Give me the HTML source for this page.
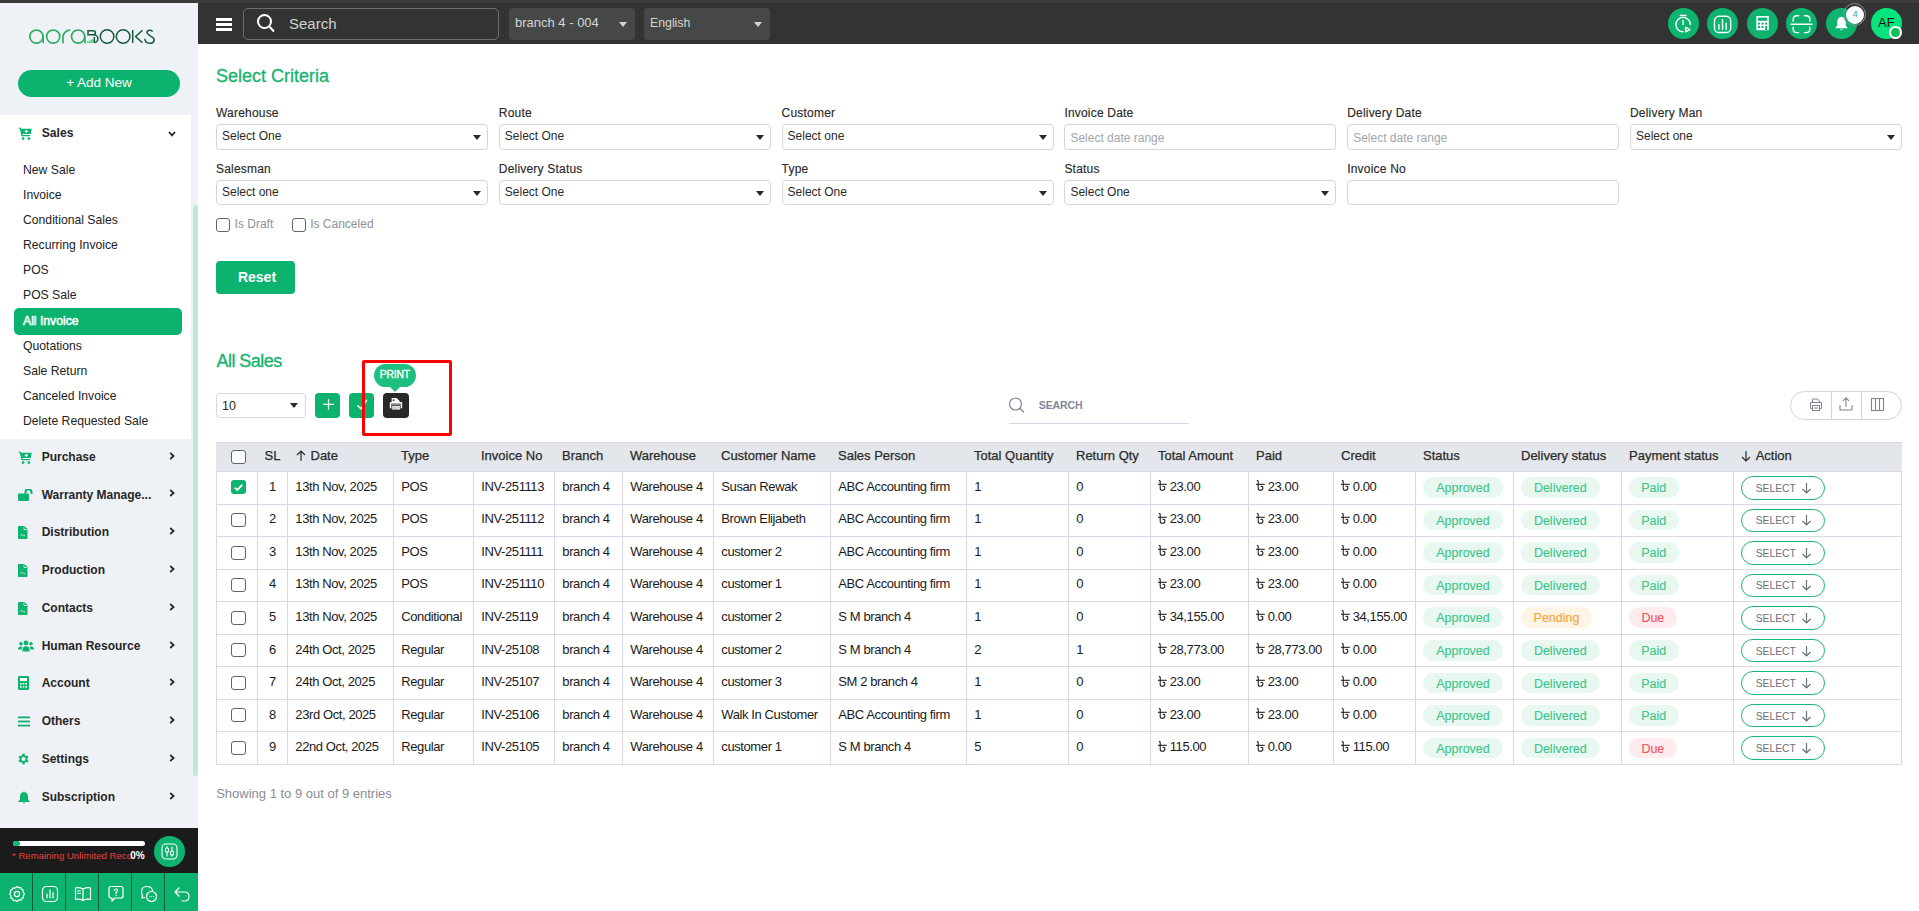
<!DOCTYPE html>
<html><head><meta charset="utf-8"><title>All Sales</title>
<style>
*{box-sizing:border-box;margin:0;padding:0}
html,body{width:1919px;height:911px;overflow:hidden;background:#fff;font-family:"Liberation Sans",sans-serif;color:#222}
.a{position:absolute}
#topstrip{left:0;top:0;width:1919px;height:3px;background:#3c3c3c}
#sb{left:0;top:3px;width:198px;height:908px;background:#eef2f7}
#sbwhite{left:0;top:115px;width:191px;height:323.5px;background:#fff}
#thumb{left:193px;top:205px;width:5px;height:571px;background:#bfe8da;border-radius:2.5px}
.sub{left:23px;font-size:12.2px;color:#222;height:25px;line-height:25px;white-space:nowrap}
.mi{left:41.7px;font-size:12px;font-weight:bold;color:#262626;white-space:nowrap;line-height:14px}
#hdr{left:198px;top:3px;width:1721px;height:41px;background:#323433}
.lbl{font-size:12px;color:#2a2a2a;white-space:nowrap;line-height:14px;letter-spacing:0.2px;-webkit-text-stroke:0.15px currentColor}
.th{font-size:13px;line-height:15px;color:#2b2b2b;white-space:nowrap;-webkit-text-stroke:0.25px currentColor}
.td{font-size:13px;line-height:15px;color:#1a1a1a;white-space:nowrap;letter-spacing:-0.4px}
.bd{height:20.5px;border-radius:10px;font-size:12.5px;line-height:22.3px;-webkit-text-stroke:0.12px currentColor;text-align:center;white-space:nowrap}
</style></head><body>
<div id="topstrip" class="a"></div>
<div id="sb" class="a"></div>
<div id="sbwhite" class="a"></div>
<div id="thumb" class="a"></div>
<svg class="a" style="left:27px;top:27px" width="130" height="19" viewBox="27 27 130 19">
<g fill="none" stroke="#2aac5c" stroke-width="1.65">
<circle cx="36.4" cy="36.6" r="6.6"/><path d="M43.2 36 V43.3"/>
<circle cx="53.2" cy="36.6" r="6.6"/>
<path d="M63 43.3 V37 A7 6.9 0 0 1 70.2 30.1"/>
<circle cx="78.1" cy="36.6" r="6.6"/><path d="M84.9 36 V43.3"/>
</g>
<path d="M87 43.1 V41.6 H88.6 V40.8 H90.2 V40 H91.6 V39.2 H93.5 V43.1Z" fill="#72d09c"/>
<g fill="none" stroke="#17583a" stroke-width="1.5">
<path d="M88 30.65 H93.3 A2.07 2.07 0 0 1 93.3 34.8 H88 Z"/>
<path d="M93 34.8 H94 A3.85 3.85 0 0 1 94 42.5 H94.2 M94.3 37 V42.5"/>
<circle cx="107.1" cy="36.5" r="6.8"/>
<circle cx="123.1" cy="36.5" r="6.8"/>
<path d="M132.7 30 V42.9 M142.5 30.2 L135.6 36.5 L142.5 42.8"/>
<path d="M152.6 31.6 C151.6 29.6 147.2 29.6 146.9 32.6 C146.9 34 148 34.8 152.6 37.3 C155.2 39 154.6 43.3 149.8 43.3 C146.6 43.3 145 41.4 144.8 38.8"/>
</g></svg>
<div class="a" style="left:18px;top:70px;width:162px;height:27px;border-radius:14px;background:#0bb36f;color:#fff;font-size:13.5px;text-align:center;line-height:25.5px">+ Add New</div>
<div class="a" style="left:18px;top:127px;line-height:0"><svg width="14" height="13" viewBox="0 0 14 13"><path d="M0.3 1.3 C0.8 0.2 2.2 0.1 2.9 1.2 L3.3 1.8 H13.8 L12.7 6.9 H4.3 L4.6 7.9 H12 V9.3 H3.5 L1.9 2.2 C1.4 1.5 0.9 1.4 0.3 1.3Z" fill="#0db36f"/><circle cx="5.1" cy="11.6" r="1.4" fill="#0db36f"/><circle cx="10.9" cy="11.6" r="1.4" fill="#0db36f"/><path d="M8.3 2.9v3M6.8 4.4h3" stroke="#fff" stroke-width="1.1"/></svg></div>
<div class="a mi" style="top:126px;font-size:12.2px">Sales</div>
<div class="a" style="left:168px;top:130.5px;line-height:0"><svg width="8" height="6" viewBox="0 0 8 6"><path d="M1 1 L4 4.3 L7 1" stroke="#262626" stroke-width="1.8" fill="none"/></svg></div>
<div class="a" style="left:18px;top:450.5px;line-height:0"><svg width="14" height="13" viewBox="0 0 14 13"><path d="M0.3 1.3 C0.8 0.2 2.2 0.1 2.9 1.2 L3.3 1.8 H13.8 L12.7 6.9 H4.3 L4.6 7.9 H12 V9.3 H3.5 L1.9 2.2 C1.4 1.5 0.9 1.4 0.3 1.3Z" fill="#0db36f"/><circle cx="5.1" cy="11.6" r="1.4" fill="#0db36f"/><circle cx="10.9" cy="11.6" r="1.4" fill="#0db36f"/><path d="M8.3 2.9v3M6.8 4.4h3" stroke="#fff" stroke-width="1.1"/></svg></div>
<div class="a mi" style="top:450px">Purchase</div>
<div class="a" style="left:169px;top:451.7px;line-height:0"><svg width="6" height="8" viewBox="0 0 6 8"><path d="M1.2 1 L4.6 4 L1.2 7" stroke="#262626" stroke-width="1.7" fill="none"/></svg></div>
<div class="a" style="left:18px;top:488.5px;line-height:0"><svg width="15" height="12" viewBox="0 0 15 12"><rect x="0" y="4.5" width="11" height="7.5" rx="1" fill="#0db36f"/><path d="M7.5 4.8 V3.3 A3 3 0 0 1 13.5 3.3 V5" stroke="#0db36f" stroke-width="2" fill="none"/></svg></div>
<div class="a mi" style="top:487.5px">Warranty Manage...</div>
<div class="a" style="left:169px;top:489.2px;line-height:0"><svg width="6" height="8" viewBox="0 0 6 8"><path d="M1.2 1 L4.6 4 L1.2 7" stroke="#262626" stroke-width="1.7" fill="none"/></svg></div>
<div class="a" style="left:18px;top:525.5px;line-height:0"><svg width="10" height="13" viewBox="0 0 10 13"><path d="M0.8 0 H6.5 L9.5 3 V12.2 Q9.5 13 8.7 13 H0.8 Q0 13 0 12.2 V0.8 Q0 0 0.8 0Z" fill="#0db36f"/><path d="M6 0.5 V3.5 H9" stroke="#fff" stroke-width="0.7" fill="none"/><path d="M2.5 9.5 Q3.5 7 4.5 9 Q5.5 10 7 9.6" stroke="#fff" stroke-width="0.7" fill="none"/></svg></div>
<div class="a mi" style="top:525px">Distribution</div>
<div class="a" style="left:169px;top:526.7px;line-height:0"><svg width="6" height="8" viewBox="0 0 6 8"><path d="M1.2 1 L4.6 4 L1.2 7" stroke="#262626" stroke-width="1.7" fill="none"/></svg></div>
<div class="a" style="left:18px;top:563.5px;line-height:0"><svg width="10" height="13" viewBox="0 0 10 13"><path d="M0.8 0 H6.5 L9.5 3 V12.2 Q9.5 13 8.7 13 H0.8 Q0 13 0 12.2 V0.8 Q0 0 0.8 0Z" fill="#0db36f"/><path d="M6 0.5 V3.5 H9" stroke="#fff" stroke-width="0.7" fill="none"/><path d="M2.5 9.5 Q3.5 7 4.5 9 Q5.5 10 7 9.6" stroke="#fff" stroke-width="0.7" fill="none"/></svg></div>
<div class="a mi" style="top:563px">Production</div>
<div class="a" style="left:169px;top:564.7px;line-height:0"><svg width="6" height="8" viewBox="0 0 6 8"><path d="M1.2 1 L4.6 4 L1.2 7" stroke="#262626" stroke-width="1.7" fill="none"/></svg></div>
<div class="a" style="left:18px;top:601.5px;line-height:0"><svg width="10" height="13" viewBox="0 0 10 13"><path d="M0.8 0 H6.5 L9.5 3 V12.2 Q9.5 13 8.7 13 H0.8 Q0 13 0 12.2 V0.8 Q0 0 0.8 0Z" fill="#0db36f"/><path d="M6 0.5 V3.5 H9" stroke="#fff" stroke-width="0.7" fill="none"/><path d="M2.5 9.5 Q3.5 7 4.5 9 Q5.5 10 7 9.6" stroke="#fff" stroke-width="0.7" fill="none"/></svg></div>
<div class="a mi" style="top:601px">Contacts</div>
<div class="a" style="left:169px;top:602.7px;line-height:0"><svg width="6" height="8" viewBox="0 0 6 8"><path d="M1.2 1 L4.6 4 L1.2 7" stroke="#262626" stroke-width="1.7" fill="none"/></svg></div>
<div class="a" style="left:18px;top:640px;line-height:0"><svg width="16" height="12" viewBox="0 0 16 12"><circle cx="8" cy="3" r="2.4" fill="#0db36f"/><circle cx="3" cy="3.8" r="1.8" fill="#0db36f"/><circle cx="13" cy="3.8" r="1.8" fill="#0db36f"/><path d="M4.3 11.5 Q4.3 6.3 8 6.3 Q11.7 6.3 11.7 11.5Z" fill="#0db36f"/><path d="M0 9.5 Q0 6.5 3 6.5 Q4 6.5 4.6 7 Q3.6 8 3.5 9.5Z M16 9.5 Q16 6.5 13 6.5 Q12 6.5 11.4 7 Q12.4 8 12.5 9.5Z" fill="#0db36f"/></svg></div>
<div class="a mi" style="top:639px">Human Resource</div>
<div class="a" style="left:169px;top:640.7px;line-height:0"><svg width="6" height="8" viewBox="0 0 6 8"><path d="M1.2 1 L4.6 4 L1.2 7" stroke="#262626" stroke-width="1.7" fill="none"/></svg></div>
<div class="a" style="left:18px;top:676px;line-height:0"><svg width="11" height="14" viewBox="0 0 11 14"><rect x="0" y="0" width="11" height="14" rx="1.2" fill="#0db36f"/><rect x="2" y="2" width="7" height="3" fill="#fff"/><g fill="#fff"><rect x="2" y="7" width="1.6" height="1.6"/><rect x="4.7" y="7" width="1.6" height="1.6"/><rect x="7.4" y="7" width="1.6" height="1.6"/><rect x="2" y="10" width="1.6" height="1.6"/><rect x="4.7" y="10" width="1.6" height="1.6"/><rect x="7.4" y="10" width="1.6" height="1.6"/></g></svg></div>
<div class="a mi" style="top:676px">Account</div>
<div class="a" style="left:169px;top:677.7px;line-height:0"><svg width="6" height="8" viewBox="0 0 6 8"><path d="M1.2 1 L4.6 4 L1.2 7" stroke="#262626" stroke-width="1.7" fill="none"/></svg></div>
<div class="a" style="left:18px;top:715.5px;line-height:0"><svg width="12" height="11" viewBox="0 0 12 11"><rect x="0" y="0.5" width="12" height="1.8" fill="#0db36f"/><rect x="0" y="4.6" width="12" height="1.8" fill="#0db36f"/><rect x="0" y="8.7" width="12" height="1.8" fill="#0db36f"/></svg></div>
<div class="a mi" style="top:714px">Others</div>
<div class="a" style="left:169px;top:715.7px;line-height:0"><svg width="6" height="8" viewBox="0 0 6 8"><path d="M1.2 1 L4.6 4 L1.2 7" stroke="#262626" stroke-width="1.7" fill="none"/></svg></div>
<div class="a" style="left:16px;top:752px;line-height:0"><svg width="14" height="14" viewBox="0 0 24 24"><path fill="#0db36f" d="M19.4 13a7.5 7.5 0 0 0 0-2l2.1-1.6-2-3.5-2.5 1a7.3 7.3 0 0 0-1.7-1L14.9 3h-4l-.4 2.9a7.3 7.3 0 0 0-1.7 1l-2.5-1-2 3.5L6.4 11a7.5 7.5 0 0 0 0 2l-2.1 1.6 2 3.5 2.5-1a7.3 7.3 0 0 0 1.7 1l.4 2.9h4l.4-2.9a7.3 7.3 0 0 0 1.7-1l2.5 1 2-3.5zM12.9 15.5a3.5 3.5 0 1 1 0-7 3.5 3.5 0 0 1 0 7z"/></svg></div>
<div class="a mi" style="top:752px">Settings</div>
<div class="a" style="left:169px;top:753.7px;line-height:0"><svg width="6" height="8" viewBox="0 0 6 8"><path d="M1.2 1 L4.6 4 L1.2 7" stroke="#262626" stroke-width="1.7" fill="none"/></svg></div>
<div class="a" style="left:18px;top:790.5px;line-height:0"><svg width="12" height="13" viewBox="0 0 12 13"><path d="M6 0.5 Q6.8 0.5 6.8 1.3 Q10 2 10 5.5 V8.5 L11.5 10.3 V11 H0.5 V10.3 L2 8.5 V5.5 Q2 2 5.2 1.3 Q5.2 0.5 6 0.5Z" fill="#0db36f"/><path d="M4.5 11.6 Q6 13.6 7.5 11.6Z" fill="#0db36f"/></svg></div>
<div class="a mi" style="top:790px">Subscription</div>
<div class="a" style="left:169px;top:791.7px;line-height:0"><svg width="6" height="8" viewBox="0 0 6 8"><path d="M1.2 1 L4.6 4 L1.2 7" stroke="#262626" stroke-width="1.7" fill="none"/></svg></div>
<div class="a sub" style="top:157.5px">New Sale</div>
<div class="a sub" style="top:182.5px">Invoice</div>
<div class="a sub" style="top:207.5px">Conditional Sales</div>
<div class="a sub" style="top:232.5px">Recurring Invoice</div>
<div class="a sub" style="top:258.0px">POS</div>
<div class="a sub" style="top:283.0px">POS Sale</div>
<div class="a" style="left:14px;top:308px;width:168px;height:27px;background:#0bb36f;border-radius:5px"></div>
<div class="a sub" style="top:308.5px;color:#fff;-webkit-text-stroke:0.5px #fff">All Invoice</div>
<div class="a sub" style="top:333.5px">Quotations</div>
<div class="a sub" style="top:358.5px">Sale Return</div>
<div class="a sub" style="top:383.5px">Canceled Invoice</div>
<div class="a sub" style="top:409.0px">Delete Requested Sale</div>
<div class="a" style="left:0;top:828px;width:198px;height:45px;background:#1b1b1b"></div>
<div class="a" style="left:13px;top:841px;width:132px;height:5px;border-radius:3px;background:#fff"></div>
<div class="a" style="left:13px;top:841px;width:7px;height:5px;border-radius:3px;background:#0db36f"></div>
<div class="a" style="left:12px;top:850px;font-size:9.6px;color:#e8403e;white-space:nowrap;line-height:12px">* Remaining Unlimited Reco</div>
<div class="a" style="left:130.3px;top:850px;font-size:10px;color:#fff;font-weight:bold;white-space:nowrap;line-height:12px">0%</div>
<div class="a" style="left:154px;top:836px;width:31px;height:31px;border-radius:50%;background:#0db36f"></div>
<svg class="a" style="left:161px;top:843px" width="17" height="17" viewBox="0 0 17 17" fill="none" stroke="#fff" stroke-width="1.1"><rect x="1" y="1" width="15" height="15" rx="4"/><path d="M6 3.5V13.5M11 3.5V13.5"/><rect x="4.5" y="5" width="3" height="4" rx="1" fill="#0db36f"/><rect x="9.5" y="8" width="3" height="4" rx="1" fill="#0db36f"/></svg>
<div class="a" style="left:0;top:873px;width:198px;height:38px;background:#0bb36f"></div>
<div class="a" style="left:32px;top:873px;width:1px;height:38px;background:#145c3c"></div>
<div class="a" style="left:65px;top:873px;width:1px;height:38px;background:#145c3c"></div>
<div class="a" style="left:98px;top:873px;width:1px;height:38px;background:#145c3c"></div>
<div class="a" style="left:131px;top:873px;width:1px;height:38px;background:#145c3c"></div>
<div class="a" style="left:164px;top:873px;width:1px;height:38px;background:#145c3c"></div>
<svg class="a" style="left:8px;top:885px" width="18" height="18" viewBox="0 0 18 18" fill="none" stroke="#fff" stroke-width="1.2" stroke-linecap="round" stroke-linejoin="round"><circle cx="9" cy="9" r="2.6"/><path d="M9 1.5l1.6 1.2 2-.3.8 1.8 1.8.8-.3 2L16.5 9l-1.2 1.6.3 2-1.8.8-.8 1.8-2-.3L9 16.5l-1.6-1.2-2 .3-.8-1.8-1.8-.8.3-2L1.5 9l1.2-1.6-.3-2 1.8-.8.8-1.8 2 .3z"/></svg>
<svg class="a" style="left:40.5px;top:885px" width="18" height="18" viewBox="0 0 18 18" fill="none" stroke="#fff" stroke-width="1.2" stroke-linecap="round" stroke-linejoin="round"><rect x="1.5" y="1.5" width="15" height="15" rx="4"/><path d="M6 13V9M9 13V5M12 13V7.5"/></svg>
<svg class="a" style="left:73.5px;top:885px" width="18" height="18" viewBox="0 0 18 18" fill="none" stroke="#fff" stroke-width="1.2" stroke-linecap="round" stroke-linejoin="round"><path d="M9 4 Q5 2 1.5 3 V14.5 Q5 13.5 9 15.5 Q13 13.5 16.5 14.5 V3 Q13 2 9 4Z M9 4V15.5 M3.5 6H6.5M3.5 8.5H6.5"/></svg>
<svg class="a" style="left:106.5px;top:885px" width="18" height="18" viewBox="0 0 18 18" fill="none" stroke="#fff" stroke-width="1.2" stroke-linecap="round" stroke-linejoin="round"><path d="M2 3.5 Q2 1.5 4 1.5 H14 Q16 1.5 16 3.5 V11 Q16 13 14 13 H8 L5 16 V13 H4 Q2 13 2 11Z"/><path d="M7.5 5.5 Q7.5 4 9 4 Q10.5 4 10.5 5.5 Q10.5 6.8 9 7.3 V8.5 M9 10.2V10.5"/></svg>
<svg class="a" style="left:139.5px;top:885px" width="18" height="18" viewBox="0 0 18 18" fill="none" stroke="#fff" stroke-width="1.2" stroke-linecap="round" stroke-linejoin="round"><path d="M12.5 5.5 Q11.5 1.5 7 1.5 Q1.5 1.5 1.5 7 Q1.5 9 2.5 10.5 L2 13 L4.5 12.5"/><circle cx="11.5" cy="11.5" r="5"/><path d="M9.5 11.5h.1M11.5 11.5h.1M13.5 11.5h.1"/></svg>
<svg class="a" style="left:172.5px;top:885px" width="18" height="18" viewBox="0 0 18 18" fill="none" stroke="#fff" stroke-width="1.2" stroke-linecap="round" stroke-linejoin="round"><path d="M6 3 L2 7 L6 11 M2 7 H11.5 Q16 7 16 11.5 Q16 16 11.5 16 H9"/></svg>
<div id="hdr" class="a"></div>
<div class="a" style="left:216px;top:18px;width:16px;height:3px;background:#fff"></div>
<div class="a" style="left:216px;top:23px;width:16px;height:3px;background:#fff"></div>
<div class="a" style="left:216px;top:28px;width:16px;height:3px;background:#fff"></div>
<div class="a" style="left:243px;top:8px;width:256px;height:32px;border:1px solid #69716e;border-radius:5px"></div>
<svg class="a" style="left:256px;top:13px" width="20" height="21" viewBox="0 0 20 21" fill="none" stroke="#fff" stroke-width="2"><circle cx="8.5" cy="8.5" r="6.5"/><path d="M13.3 13.5 L18 18.5"/></svg>
<div class="a" style="left:289px;top:15px;font-size:15px;color:#cfd2d0;line-height:18px">Search</div>
<div class="a" style="left:509px;top:8px;width:126px;height:32px;border-radius:4px;background:#454847"></div>
<div class="a" style="left:515px;top:15px;font-size:13px;color:#d4d6d5;line-height:15px;white-space:nowrap">branch 4 - 004</div>
<div class="a" style="left:619px;top:22px;width:0;height:0;border-left:4.5px solid transparent;border-right:4.5px solid transparent;border-top:5px solid #d4d6d5"></div>
<div class="a" style="left:644px;top:8px;width:126px;height:32px;border-radius:4px;background:#454847"></div>
<div class="a" style="left:650px;top:16px;font-size:12.3px;color:#d4d6d5;line-height:15px;white-space:nowrap">English</div>
<div class="a" style="left:754px;top:22px;width:0;height:0;border-left:4.5px solid transparent;border-right:4.5px solid transparent;border-top:5px solid #d4d6d5"></div>
<div class="a" style="left:1667.8px;top:7.8px;width:31px;height:31px;border-radius:50%;background:#0db36f"></div>
<svg class="a" style="left:1671.8px;top:11.8px" width="23" height="23" viewBox="0 0 23 23" fill="none" stroke="#fff" stroke-width="1.4" stroke-linecap="round"><path d="M8.3 3.5 H14"/><path d="M11.1 8.4 V12.4"/><path d="M18.3 12.6 A7.2 7.2 0 1 0 11.1 19.8"/><path d="M13.6 15.4 L17.9 17.6 L13.6 19.8Z" stroke-linejoin="round"/></svg>
<div class="a" style="left:1707.4px;top:7.8px;width:31px;height:31px;border-radius:50%;background:#0db36f"></div>
<svg class="a" style="left:1711.4px;top:11.8px" width="23" height="23" viewBox="0 0 23 23" fill="none" stroke="#fff" stroke-width="1.4" stroke-linecap="round"><rect x="3.5" y="4.3" width="16.2" height="16.2" rx="4.6"/><path d="M7.9 17.2V12.4M11.5 17.2V7.6M15.1 17.2V11.2"/></svg>
<div class="a" style="left:1746.9px;top:7.8px;width:31px;height:31px;border-radius:50%;background:#0db36f"></div>
<svg class="a" style="left:1750.9px;top:11.8px" width="23" height="23" viewBox="0 0 23 23" fill="none" stroke="#fff" stroke-width="1.4" stroke-linecap="round"><rect x="5.3" y="4" width="12.5" height="14.2" rx="0.6" fill="#fff" stroke="none"/><rect x="6.9" y="5.6" width="9.3" height="3.2" fill="#0db36f" stroke="none"/><g fill="#0db36f" stroke="none"><rect x="7" y="10.6" width="2" height="2"/><rect x="10.6" y="10.6" width="2" height="2"/><rect x="14.2" y="10.6" width="2" height="2"/><rect x="7" y="14" width="2" height="2"/><rect x="10.6" y="14" width="2" height="2"/><rect x="14.2" y="14" width="2" height="4.2"/></g></svg>
<div class="a" style="left:1786.3px;top:7.8px;width:31px;height:31px;border-radius:50%;background:#0db36f"></div>
<svg class="a" style="left:1790.3px;top:11.8px" width="23" height="23" viewBox="0 0 23 23" fill="none" stroke="#fff" stroke-width="1.4" stroke-linecap="round"><path d="M3.2 9.3 V7.5 Q3.2 3.8 6.9 3.8 H8.6 M14.4 3.8 H16.1 Q19.8 3.8 19.8 7.5 V9.3 M19.8 15.1 V16.9 Q19.8 20.6 16.1 20.6 H14.4 M8.6 20.6 H6.9 Q3.2 20.6 3.2 16.9 V15.1"/><path d="M1 12.2 H22"/></svg>
<div class="a" style="left:1825.5px;top:7.8px;width:31px;height:31px;border-radius:50%;background:#0db36f"></div>
<svg class="a" style="left:1829.5px;top:11.8px" width="23" height="23" viewBox="0 0 23 23" fill="none" stroke="#fff" stroke-width="1.4" stroke-linecap="round"><path d="M11.5 4.8 Q15.8 5.3 15.8 10.3 V13.6 L17.9 16.3 H5.1 L7.2 13.6 V10.3 Q7.2 5.3 11.5 4.8Z" fill="#fff" stroke="none"/><path d="M10 17.2 Q11.5 19.2 13 17.2Z" fill="#fff" stroke="none"/></svg>
<div class="a" style="left:1843.4px;top:2.8px;width:23px;height:23px;border-radius:50%;border:1px solid #8d8f8e"></div>
<div class="a" style="left:1846px;top:5.8px;width:18px;height:18px;border-radius:50%;background:#fff"></div>
<div class="a" style="left:1846px;top:9px;width:18px;text-align:center;font-size:9.3px;color:#3aa3c2;line-height:11px">4</div>
<div class="a" style="left:1870.9px;top:7.8px;width:31px;height:31px;border-radius:50%;background:#06e47b"></div>
<div class="a" style="left:1870.9px;top:15px;width:31px;text-align:center;font-size:13px;color:#111;line-height:16px">AF</div>
<div class="a" style="left:1889.1px;top:25.9px;width:12.8px;height:12.8px;border-radius:50%;background:#0fbf55;border:2px solid #fff"></div>
<div class="a" style="left:216px;top:65.7px;font-size:18px;line-height:20px;color:#16b36f;white-space:nowrap;-webkit-text-stroke:0.3px #16b36f">Select Criteria</div>
<div class="a" style="left:216.5px;top:350.7px;font-size:18px;line-height:20px;color:#16b36f;white-space:nowrap;letter-spacing:-0.55px;-webkit-text-stroke:0.3px #16b36f">All Sales</div>
<div class="a lbl" style="left:216px;top:106.3px">Warehouse</div>
<div class="a" style="left:216px;top:124px;width:272px;height:26px;border:1px solid #d5d4e3;border-radius:4px;background:#fff"></div>
<div class="a" style="left:222px;top:129px;font-size:12px;line-height:14px;color:#2a2a2a;white-space:nowrap">Select One</div>
<div class="a" style="left:473px;top:134.5px;width:0;height:0;border-left:4.3px solid transparent;border-right:4.3px solid transparent;border-top:5px solid #2a2a2a"></div>
<div class="a lbl" style="left:498.8px;top:106.3px">Route</div>
<div class="a" style="left:498.8px;top:124px;width:272px;height:26px;border:1px solid #d5d4e3;border-radius:4px;background:#fff"></div>
<div class="a" style="left:504.8px;top:129px;font-size:12px;line-height:14px;color:#2a2a2a;white-space:nowrap">Select One</div>
<div class="a" style="left:755.8px;top:134.5px;width:0;height:0;border-left:4.3px solid transparent;border-right:4.3px solid transparent;border-top:5px solid #2a2a2a"></div>
<div class="a lbl" style="left:781.6px;top:106.3px">Customer</div>
<div class="a" style="left:781.6px;top:124px;width:272px;height:26px;border:1px solid #d5d4e3;border-radius:4px;background:#fff"></div>
<div class="a" style="left:787.6px;top:129px;font-size:12px;line-height:14px;color:#2a2a2a;white-space:nowrap">Select one</div>
<div class="a" style="left:1038.6px;top:134.5px;width:0;height:0;border-left:4.3px solid transparent;border-right:4.3px solid transparent;border-top:5px solid #2a2a2a"></div>
<div class="a lbl" style="left:1064.4px;top:106.3px">Invoice Date</div>
<div class="a" style="left:1064.4px;top:124px;width:272px;height:26px;border:1px solid #d5d4e3;border-radius:4px;background:#fff"></div>
<div class="a" style="left:1070.4px;top:130.5px;font-size:12px;line-height:14px;color:#a3a6ae;white-space:nowrap">Select date range</div>
<div class="a lbl" style="left:1347.2px;top:106.3px">Delivery Date</div>
<div class="a" style="left:1347.2px;top:124px;width:272px;height:26px;border:1px solid #d5d4e3;border-radius:4px;background:#fff"></div>
<div class="a" style="left:1353.2px;top:130.5px;font-size:12px;line-height:14px;color:#a3a6ae;white-space:nowrap">Select date range</div>
<div class="a lbl" style="left:1630px;top:106.3px">Delivery Man</div>
<div class="a" style="left:1630px;top:124px;width:272px;height:26px;border:1px solid #d5d4e3;border-radius:4px;background:#fff"></div>
<div class="a" style="left:1636px;top:129px;font-size:12px;line-height:14px;color:#2a2a2a;white-space:nowrap">Select one</div>
<div class="a" style="left:1887px;top:134.5px;width:0;height:0;border-left:4.3px solid transparent;border-right:4.3px solid transparent;border-top:5px solid #2a2a2a"></div>
<div class="a lbl" style="left:216px;top:161.8px">Salesman</div>
<div class="a" style="left:216px;top:180px;width:272px;height:25px;border:1px solid #d5d4e3;border-radius:4px;background:#fff"></div>
<div class="a" style="left:222px;top:185px;font-size:12px;line-height:14px;color:#2a2a2a;white-space:nowrap">Select one</div>
<div class="a" style="left:473px;top:190.5px;width:0;height:0;border-left:4.3px solid transparent;border-right:4.3px solid transparent;border-top:5px solid #2a2a2a"></div>
<div class="a lbl" style="left:498.8px;top:161.8px">Delivery Status</div>
<div class="a" style="left:498.8px;top:180px;width:272px;height:25px;border:1px solid #d5d4e3;border-radius:4px;background:#fff"></div>
<div class="a" style="left:504.8px;top:185px;font-size:12px;line-height:14px;color:#2a2a2a;white-space:nowrap">Select One</div>
<div class="a" style="left:755.8px;top:190.5px;width:0;height:0;border-left:4.3px solid transparent;border-right:4.3px solid transparent;border-top:5px solid #2a2a2a"></div>
<div class="a lbl" style="left:781.6px;top:161.8px">Type</div>
<div class="a" style="left:781.6px;top:180px;width:272px;height:25px;border:1px solid #d5d4e3;border-radius:4px;background:#fff"></div>
<div class="a" style="left:787.6px;top:185px;font-size:12px;line-height:14px;color:#2a2a2a;white-space:nowrap">Select One</div>
<div class="a" style="left:1038.6px;top:190.5px;width:0;height:0;border-left:4.3px solid transparent;border-right:4.3px solid transparent;border-top:5px solid #2a2a2a"></div>
<div class="a lbl" style="left:1064.4px;top:161.8px">Status</div>
<div class="a" style="left:1064.4px;top:180px;width:272px;height:25px;border:1px solid #d5d4e3;border-radius:4px;background:#fff"></div>
<div class="a" style="left:1070.4px;top:185px;font-size:12px;line-height:14px;color:#2a2a2a;white-space:nowrap">Select One</div>
<div class="a" style="left:1321.4px;top:190.5px;width:0;height:0;border-left:4.3px solid transparent;border-right:4.3px solid transparent;border-top:5px solid #2a2a2a"></div>
<div class="a lbl" style="left:1347.2px;top:161.8px">Invoice No</div>
<div class="a" style="left:1347.2px;top:180px;width:272px;height:25px;border:1px solid #d5d4e3;border-radius:4px;background:#fff"></div>
<div class="a" style="left:216px;top:218.3px;width:13.8px;height:13.5px;border:1px solid #5d6374;border-radius:3px"></div>
<div class="a" style="left:234.6px;top:217.3px;font-size:12px;line-height:14px;color:#8e919a;white-space:nowrap">Is Draft</div>
<div class="a" style="left:292.3px;top:218.3px;width:13.5px;height:13.5px;border:1px solid #5d6374;border-radius:3px"></div>
<div class="a" style="left:310.2px;top:217.3px;font-size:12px;line-height:14px;color:#8e919a;white-space:nowrap">Is Canceled</div>
<div class="a" style="left:216px;top:261px;width:79px;height:33px;border-radius:4px;background:#0bb36f;color:#fff;font-weight:bold;font-size:14px;line-height:33px;text-align:center;padding-left:3px">Reset</div>
<div class="a" style="left:216px;top:393px;width:90px;height:25px;border:1px solid #d5d4e3;border-radius:4px;background:#fff"></div>
<div class="a" style="left:222px;top:398.5px;font-size:12.5px;line-height:14px;color:#2a2a2a">10</div>
<div class="a" style="left:290px;top:403.3px;width:0;height:0;border-left:4.5px solid transparent;border-right:4.5px solid transparent;border-top:5px solid #2a2a2a"></div>
<div class="a" style="left:315px;top:393px;width:25px;height:25px;border-radius:4px;background:#0bb36f"></div>
<svg class="a" style="left:321.5px;top:397.6px" width="13" height="13" viewBox="0 0 13 13"><path d="M1 6.3H12M6.5 1V11.6" stroke="#fff" stroke-width="1.3"/></svg>
<div class="a" style="left:349px;top:393px;width:25px;height:25px;border-radius:4px;background:#0bb36f"></div>
<svg class="a" style="left:354px;top:397px" width="16" height="14" viewBox="0 0 16 14"><path d="M3.5 8.5 L7 11.8 L12.8 3" stroke="#fff" stroke-width="1.6" fill="none"/></svg>
<div class="a" style="left:383px;top:393px;width:26px;height:25px;border-radius:4px;background:#282828"></div>
<svg class="a" style="left:389px;top:397px" width="15" height="15" viewBox="0 0 15 15"><path d="M2.6 1 H7.6 L10.6 4 V6 H2.6Z" fill="#fff"/><circle cx="4.6" cy="3.2" r="0.9" fill="#282828"/><rect x="0.8" y="5" width="12.4" height="6.5" rx="1.2" fill="#fff"/><path d="M1.8 7.1 H12.2" stroke="#282828" stroke-width="0.9"/><rect x="2.8" y="8.4" width="8.4" height="4.6" fill="#fff" stroke="#282828" stroke-width="0.8"/><path d="M4 10.2H10M4 11.8H9" stroke="#999" stroke-width="0.7"/></svg>
<div class="a" style="left:373.7px;top:363.7px;width:42.4px;height:23px;border-radius:11.5px;background:#1ebf80"></div>
<div class="a" style="left:389.5px;top:386.5px;width:0;height:0;border-left:5px solid transparent;border-right:5px solid transparent;border-top:5px solid #1ebf80"></div>
<div class="a" style="left:373.7px;top:369.4px;width:42.4px;text-align:center;font-size:10.3px;line-height:12px;color:#fff;-webkit-text-stroke:0.35px #fff;letter-spacing:-0.1px">PRINT</div>
<div class="a" style="left:362px;top:360px;width:90px;height:76px;border:3px solid #fd0000;border-radius:2px"></div>
<svg class="a" style="left:1008px;top:397px" width="18" height="17" viewBox="0 0 18 17" fill="none" stroke="#7c8496" stroke-width="1.2"><circle cx="7.5" cy="7" r="6"/><path d="M11.8 11.3 L16 15.3"/></svg>
<div class="a" style="left:1038.8px;top:398.5px;font-size:10.6px;line-height:13px;color:#80889a;font-weight:bold;white-space:nowrap;letter-spacing:-0.2px">SEARCH</div>
<div class="a" style="left:1009px;top:423px;width:180px;height:1px;background:#d7d6e4"></div>
<div class="a" style="left:1789.6px;top:391.3px;width:112px;height:28.6px;border:1px solid #d3d2e0;border-radius:14.3px"></div>
<div class="a" style="left:1831px;top:391.3px;width:1px;height:28.2px;background:#d3d2e0"></div>
<div class="a" style="left:1861px;top:391.3px;width:1px;height:28.2px;background:#d3d2e0"></div>
<svg class="a" style="left:1808px;top:397px" width="16" height="16" viewBox="0 0 16 16" fill="none" stroke="#80848c" stroke-width="1"><path d="M4.5 5.5V2H9.5L11.5 4V5.5"/><path d="M4 11.5H2.5V5.5H13.5V11.5H12"/><rect x="4.5" y="8.5" width="7" height="5"/><path d="M6 11H10"/></svg>
<svg class="a" style="left:1838px;top:396px" width="16" height="16" viewBox="0 0 16 16" fill="none" stroke="#80848c" stroke-width="1.1"><path d="M8 11V2M5 4.8L8 1.8L11 4.8"/><path d="M2 9V14H14V9"/></svg>
<svg class="a" style="left:1870px;top:397px" width="15" height="15" viewBox="0 0 15 15" fill="none" stroke="#80848c" stroke-width="1.1"><rect x="1.5" y="1.5" width="12" height="12"/><path d="M5.5 1.5V13.5M9.5 1.5V13.5"/></svg>
<div class="a" style="left:216px;top:442px;width:1685.5px;height:30px;background:#e3e6ea;border-top:1px solid #dad8e8"></div>
<div class="a" style="left:216px;top:471.00px;width:1685.5px;height:1px;background:#dad8e8"></div>
<div class="a" style="left:216px;top:503.55px;width:1685.5px;height:1px;background:#dad8e8"></div>
<div class="a" style="left:216px;top:536.10px;width:1685.5px;height:1px;background:#dad8e8"></div>
<div class="a" style="left:216px;top:568.65px;width:1685.5px;height:1px;background:#dad8e8"></div>
<div class="a" style="left:216px;top:601.20px;width:1685.5px;height:1px;background:#dad8e8"></div>
<div class="a" style="left:216px;top:633.75px;width:1685.5px;height:1px;background:#dad8e8"></div>
<div class="a" style="left:216px;top:666.30px;width:1685.5px;height:1px;background:#dad8e8"></div>
<div class="a" style="left:216px;top:698.85px;width:1685.5px;height:1px;background:#dad8e8"></div>
<div class="a" style="left:216px;top:731.40px;width:1685.5px;height:1px;background:#dad8e8"></div>
<div class="a" style="left:216px;top:763.95px;width:1685.5px;height:1px;background:#dad8e8"></div>
<div class="a" style="left:216.0px;top:471.5px;width:1px;height:292.95px;background:#dad8e8"></div>
<div class="a" style="left:257.0px;top:471.5px;width:1px;height:292.95px;background:#dad8e8"></div>
<div class="a" style="left:287.0px;top:471.5px;width:1px;height:292.95px;background:#dad8e8"></div>
<div class="a" style="left:393.0px;top:471.5px;width:1px;height:292.95px;background:#dad8e8"></div>
<div class="a" style="left:473.0px;top:471.5px;width:1px;height:292.95px;background:#dad8e8"></div>
<div class="a" style="left:554.0px;top:471.5px;width:1px;height:292.95px;background:#dad8e8"></div>
<div class="a" style="left:622.0px;top:471.5px;width:1px;height:292.95px;background:#dad8e8"></div>
<div class="a" style="left:713.0px;top:471.5px;width:1px;height:292.95px;background:#dad8e8"></div>
<div class="a" style="left:830.0px;top:471.5px;width:1px;height:292.95px;background:#dad8e8"></div>
<div class="a" style="left:966.0px;top:471.5px;width:1px;height:292.95px;background:#dad8e8"></div>
<div class="a" style="left:1068.0px;top:471.5px;width:1px;height:292.95px;background:#dad8e8"></div>
<div class="a" style="left:1150.0px;top:471.5px;width:1px;height:292.95px;background:#dad8e8"></div>
<div class="a" style="left:1248.0px;top:471.5px;width:1px;height:292.95px;background:#dad8e8"></div>
<div class="a" style="left:1333.0px;top:471.5px;width:1px;height:292.95px;background:#dad8e8"></div>
<div class="a" style="left:1415.0px;top:471.5px;width:1px;height:292.95px;background:#dad8e8"></div>
<div class="a" style="left:1513.0px;top:471.5px;width:1px;height:292.95px;background:#dad8e8"></div>
<div class="a" style="left:1621.0px;top:471.5px;width:1px;height:292.95px;background:#dad8e8"></div>
<div class="a" style="left:1733.0px;top:471.5px;width:1px;height:292.95px;background:#dad8e8"></div>
<div class="a" style="left:1901.0px;top:471.5px;width:1px;height:292.95px;background:#dad8e8"></div>
<div class="a" style="left:231.3px;top:449.8px;width:14.5px;height:14px;border:1.2px solid #5d6374;border-radius:3px;background:#fff"></div>
<div class="a th" style="left:264.5px;top:447.6px">SL</div>
<svg class="a" style="left:296px;top:449.5px" width="10" height="12" viewBox="0 0 10 12" fill="none" stroke="#2b2b2b" stroke-width="1.2"><path d="M5 11V1.2M1 5L5 1L9 5"/></svg>
<div class="a th" style="left:310.5px;top:447.6px">Date</div>
<div class="a th" style="left:401.0px;top:447.6px">Type</div>
<div class="a th" style="left:481.0px;top:447.6px">Invoice No</div>
<div class="a th" style="left:562.0px;top:447.6px">Branch</div>
<div class="a th" style="left:630.0px;top:447.6px">Warehouse</div>
<div class="a th" style="left:721.0px;top:447.6px">Customer Name</div>
<div class="a th" style="left:838.0px;top:447.6px">Sales Person</div>
<div class="a th" style="left:974.0px;top:447.6px">Total Quantity</div>
<div class="a th" style="left:1076.0px;top:447.6px">Return Qty</div>
<div class="a th" style="left:1158.0px;top:447.6px">Total Amount</div>
<div class="a th" style="left:1256.0px;top:447.6px">Paid</div>
<div class="a th" style="left:1341.0px;top:447.6px">Credit</div>
<div class="a th" style="left:1423.0px;top:447.6px">Status</div>
<div class="a th" style="left:1521.0px;top:447.6px">Delivery status</div>
<div class="a th" style="left:1629.0px;top:447.6px">Payment status</div>
<svg class="a" style="left:1741px;top:449.5px" width="10" height="12" viewBox="0 0 10 12" fill="none" stroke="#2b2b2b" stroke-width="1.2"><path d="M5 1V10.8M1 7L5 11L9 7"/></svg>
<div class="a th" style="left:1755.7px;top:447.6px">Action</div>
<div class="a" style="left:231.3px;top:480.47px;width:14.5px;height:14px;border-radius:3px;background:#0db36f"></div>
<svg class="a" style="left:233px;top:481.77px" width="11" height="11" viewBox="0 0 11 11"><path d="M1.8 5.6 L4.3 8 L9.2 2.8" stroke="#fff" stroke-width="1.9" fill="none"/></svg>
<div class="a td" style="left:257.5px;width:30px;text-align:center;top:478.77px">1</div>
<div class="a td" style="left:295.3px;top:478.77px">13th Nov, 2025</div>
<div class="a td" style="left:401.3px;top:478.77px">POS</div>
<div class="a td" style="left:481.3px;top:478.77px">INV-251113</div>
<div class="a td" style="left:562.3px;top:478.77px">branch 4</div>
<div class="a td" style="left:630.3px;top:478.77px">Warehouse 4</div>
<div class="a td" style="left:721.3px;top:478.77px">Susan Rewak</div>
<div class="a td" style="left:838.3px;top:478.77px">ABC Accounting firm</div>
<div class="a td" style="left:974.3px;top:478.77px">1</div>
<div class="a td" style="left:1076.3px;top:478.77px">0</div>
<div class="a td" style="left:1158.3px;top:478.77px;padding-left:11.4px"><svg width="9" height="11" viewBox="0 0 9 11" style="position:absolute;left:0;top:1.5px" fill="none" stroke="#1a1a1a" stroke-width="1.05"><path d="M0.9 0.9 Q1.6 0.2 2.2 1.2 V8.2 Q2.2 10.3 4.4 10.3 Q6.9 10.3 6.9 8 Q6.9 5.9 4.6 6.4"/><path d="M0 4.3H8.8"/></svg>23.00</div>
<div class="a td" style="left:1256.3px;top:478.77px;padding-left:11.4px"><svg width="9" height="11" viewBox="0 0 9 11" style="position:absolute;left:0;top:1.5px" fill="none" stroke="#1a1a1a" stroke-width="1.05"><path d="M0.9 0.9 Q1.6 0.2 2.2 1.2 V8.2 Q2.2 10.3 4.4 10.3 Q6.9 10.3 6.9 8 Q6.9 5.9 4.6 6.4"/><path d="M0 4.3H8.8"/></svg>23.00</div>
<div class="a td" style="left:1341.3px;top:478.77px;padding-left:11.4px"><svg width="9" height="11" viewBox="0 0 9 11" style="position:absolute;left:0;top:1.5px" fill="none" stroke="#1a1a1a" stroke-width="1.05"><path d="M0.9 0.9 Q1.6 0.2 2.2 1.2 V8.2 Q2.2 10.3 4.4 10.3 Q6.9 10.3 6.9 8 Q6.9 5.9 4.6 6.4"/><path d="M0 4.3H8.8"/></svg>0.00</div>
<div class="a bd" style="left:1423px;top:477.27px;width:80px;background:#e8f8f0;color:#3cc58a">Approved</div>
<div class="a bd" style="left:1521px;top:477.27px;width:78.6px;background:#e8f8f0;color:#3cc58a">Delivered</div>
<div class="a bd" style="left:1629px;top:477.27px;width:49.6px;background:#e8f8f0;color:#3cc58a">Paid</div>
<div class="a" style="left:1741px;top:475.97px;width:84px;height:23.6px;border:1.4px solid #1bb476;border-radius:12px"></div>
<div class="a" style="left:1755.7px;top:481.77px;font-size:10.3px;line-height:13px;color:#6b6f78;white-space:nowrap">SELECT</div>
<svg class="a" style="left:1801px;top:481.77px" width="11" height="12" viewBox="0 0 11 12" fill="none" stroke="#6b6f78" stroke-width="1.2"><path d="M5.5 1V10.8M1.5 7L5.5 11L9.5 7"/></svg>
<div class="a" style="left:231.3px;top:513.03px;width:14.5px;height:14px;border:1.2px solid #5d6374;border-radius:3px;background:#fff"></div>
<div class="a td" style="left:257.5px;width:30px;text-align:center;top:511.33px">2</div>
<div class="a td" style="left:295.3px;top:511.33px">13th Nov, 2025</div>
<div class="a td" style="left:401.3px;top:511.33px">POS</div>
<div class="a td" style="left:481.3px;top:511.33px">INV-251112</div>
<div class="a td" style="left:562.3px;top:511.33px">branch 4</div>
<div class="a td" style="left:630.3px;top:511.33px">Warehouse 4</div>
<div class="a td" style="left:721.3px;top:511.33px">Brown Elijabeth</div>
<div class="a td" style="left:838.3px;top:511.33px">ABC Accounting firm</div>
<div class="a td" style="left:974.3px;top:511.33px">1</div>
<div class="a td" style="left:1076.3px;top:511.33px">0</div>
<div class="a td" style="left:1158.3px;top:511.33px;padding-left:11.4px"><svg width="9" height="11" viewBox="0 0 9 11" style="position:absolute;left:0;top:1.5px" fill="none" stroke="#1a1a1a" stroke-width="1.05"><path d="M0.9 0.9 Q1.6 0.2 2.2 1.2 V8.2 Q2.2 10.3 4.4 10.3 Q6.9 10.3 6.9 8 Q6.9 5.9 4.6 6.4"/><path d="M0 4.3H8.8"/></svg>23.00</div>
<div class="a td" style="left:1256.3px;top:511.33px;padding-left:11.4px"><svg width="9" height="11" viewBox="0 0 9 11" style="position:absolute;left:0;top:1.5px" fill="none" stroke="#1a1a1a" stroke-width="1.05"><path d="M0.9 0.9 Q1.6 0.2 2.2 1.2 V8.2 Q2.2 10.3 4.4 10.3 Q6.9 10.3 6.9 8 Q6.9 5.9 4.6 6.4"/><path d="M0 4.3H8.8"/></svg>23.00</div>
<div class="a td" style="left:1341.3px;top:511.33px;padding-left:11.4px"><svg width="9" height="11" viewBox="0 0 9 11" style="position:absolute;left:0;top:1.5px" fill="none" stroke="#1a1a1a" stroke-width="1.05"><path d="M0.9 0.9 Q1.6 0.2 2.2 1.2 V8.2 Q2.2 10.3 4.4 10.3 Q6.9 10.3 6.9 8 Q6.9 5.9 4.6 6.4"/><path d="M0 4.3H8.8"/></svg>0.00</div>
<div class="a bd" style="left:1423px;top:509.83px;width:80px;background:#e8f8f0;color:#3cc58a">Approved</div>
<div class="a bd" style="left:1521px;top:509.83px;width:78.6px;background:#e8f8f0;color:#3cc58a">Delivered</div>
<div class="a bd" style="left:1629px;top:509.83px;width:49.6px;background:#e8f8f0;color:#3cc58a">Paid</div>
<div class="a" style="left:1741px;top:508.53px;width:84px;height:23.6px;border:1.4px solid #1bb476;border-radius:12px"></div>
<div class="a" style="left:1755.7px;top:514.33px;font-size:10.3px;line-height:13px;color:#6b6f78;white-space:nowrap">SELECT</div>
<svg class="a" style="left:1801px;top:514.33px" width="11" height="12" viewBox="0 0 11 12" fill="none" stroke="#6b6f78" stroke-width="1.2"><path d="M5.5 1V10.8M1.5 7L5.5 11L9.5 7"/></svg>
<div class="a" style="left:231.3px;top:545.58px;width:14.5px;height:14px;border:1.2px solid #5d6374;border-radius:3px;background:#fff"></div>
<div class="a td" style="left:257.5px;width:30px;text-align:center;top:543.88px">3</div>
<div class="a td" style="left:295.3px;top:543.88px">13th Nov, 2025</div>
<div class="a td" style="left:401.3px;top:543.88px">POS</div>
<div class="a td" style="left:481.3px;top:543.88px">INV-251111</div>
<div class="a td" style="left:562.3px;top:543.88px">branch 4</div>
<div class="a td" style="left:630.3px;top:543.88px">Warehouse 4</div>
<div class="a td" style="left:721.3px;top:543.88px">customer 2</div>
<div class="a td" style="left:838.3px;top:543.88px">ABC Accounting firm</div>
<div class="a td" style="left:974.3px;top:543.88px">1</div>
<div class="a td" style="left:1076.3px;top:543.88px">0</div>
<div class="a td" style="left:1158.3px;top:543.88px;padding-left:11.4px"><svg width="9" height="11" viewBox="0 0 9 11" style="position:absolute;left:0;top:1.5px" fill="none" stroke="#1a1a1a" stroke-width="1.05"><path d="M0.9 0.9 Q1.6 0.2 2.2 1.2 V8.2 Q2.2 10.3 4.4 10.3 Q6.9 10.3 6.9 8 Q6.9 5.9 4.6 6.4"/><path d="M0 4.3H8.8"/></svg>23.00</div>
<div class="a td" style="left:1256.3px;top:543.88px;padding-left:11.4px"><svg width="9" height="11" viewBox="0 0 9 11" style="position:absolute;left:0;top:1.5px" fill="none" stroke="#1a1a1a" stroke-width="1.05"><path d="M0.9 0.9 Q1.6 0.2 2.2 1.2 V8.2 Q2.2 10.3 4.4 10.3 Q6.9 10.3 6.9 8 Q6.9 5.9 4.6 6.4"/><path d="M0 4.3H8.8"/></svg>23.00</div>
<div class="a td" style="left:1341.3px;top:543.88px;padding-left:11.4px"><svg width="9" height="11" viewBox="0 0 9 11" style="position:absolute;left:0;top:1.5px" fill="none" stroke="#1a1a1a" stroke-width="1.05"><path d="M0.9 0.9 Q1.6 0.2 2.2 1.2 V8.2 Q2.2 10.3 4.4 10.3 Q6.9 10.3 6.9 8 Q6.9 5.9 4.6 6.4"/><path d="M0 4.3H8.8"/></svg>0.00</div>
<div class="a bd" style="left:1423px;top:542.38px;width:80px;background:#e8f8f0;color:#3cc58a">Approved</div>
<div class="a bd" style="left:1521px;top:542.38px;width:78.6px;background:#e8f8f0;color:#3cc58a">Delivered</div>
<div class="a bd" style="left:1629px;top:542.38px;width:49.6px;background:#e8f8f0;color:#3cc58a">Paid</div>
<div class="a" style="left:1741px;top:541.08px;width:84px;height:23.6px;border:1.4px solid #1bb476;border-radius:12px"></div>
<div class="a" style="left:1755.7px;top:546.88px;font-size:10.3px;line-height:13px;color:#6b6f78;white-space:nowrap">SELECT</div>
<svg class="a" style="left:1801px;top:546.88px" width="11" height="12" viewBox="0 0 11 12" fill="none" stroke="#6b6f78" stroke-width="1.2"><path d="M5.5 1V10.8M1.5 7L5.5 11L9.5 7"/></svg>
<div class="a" style="left:231.3px;top:578.12px;width:14.5px;height:14px;border:1.2px solid #5d6374;border-radius:3px;background:#fff"></div>
<div class="a td" style="left:257.5px;width:30px;text-align:center;top:576.42px">4</div>
<div class="a td" style="left:295.3px;top:576.42px">13th Nov, 2025</div>
<div class="a td" style="left:401.3px;top:576.42px">POS</div>
<div class="a td" style="left:481.3px;top:576.42px">INV-251110</div>
<div class="a td" style="left:562.3px;top:576.42px">branch 4</div>
<div class="a td" style="left:630.3px;top:576.42px">Warehouse 4</div>
<div class="a td" style="left:721.3px;top:576.42px">customer 1</div>
<div class="a td" style="left:838.3px;top:576.42px">ABC Accounting firm</div>
<div class="a td" style="left:974.3px;top:576.42px">1</div>
<div class="a td" style="left:1076.3px;top:576.42px">0</div>
<div class="a td" style="left:1158.3px;top:576.42px;padding-left:11.4px"><svg width="9" height="11" viewBox="0 0 9 11" style="position:absolute;left:0;top:1.5px" fill="none" stroke="#1a1a1a" stroke-width="1.05"><path d="M0.9 0.9 Q1.6 0.2 2.2 1.2 V8.2 Q2.2 10.3 4.4 10.3 Q6.9 10.3 6.9 8 Q6.9 5.9 4.6 6.4"/><path d="M0 4.3H8.8"/></svg>23.00</div>
<div class="a td" style="left:1256.3px;top:576.42px;padding-left:11.4px"><svg width="9" height="11" viewBox="0 0 9 11" style="position:absolute;left:0;top:1.5px" fill="none" stroke="#1a1a1a" stroke-width="1.05"><path d="M0.9 0.9 Q1.6 0.2 2.2 1.2 V8.2 Q2.2 10.3 4.4 10.3 Q6.9 10.3 6.9 8 Q6.9 5.9 4.6 6.4"/><path d="M0 4.3H8.8"/></svg>23.00</div>
<div class="a td" style="left:1341.3px;top:576.42px;padding-left:11.4px"><svg width="9" height="11" viewBox="0 0 9 11" style="position:absolute;left:0;top:1.5px" fill="none" stroke="#1a1a1a" stroke-width="1.05"><path d="M0.9 0.9 Q1.6 0.2 2.2 1.2 V8.2 Q2.2 10.3 4.4 10.3 Q6.9 10.3 6.9 8 Q6.9 5.9 4.6 6.4"/><path d="M0 4.3H8.8"/></svg>0.00</div>
<div class="a bd" style="left:1423px;top:574.92px;width:80px;background:#e8f8f0;color:#3cc58a">Approved</div>
<div class="a bd" style="left:1521px;top:574.92px;width:78.6px;background:#e8f8f0;color:#3cc58a">Delivered</div>
<div class="a bd" style="left:1629px;top:574.92px;width:49.6px;background:#e8f8f0;color:#3cc58a">Paid</div>
<div class="a" style="left:1741px;top:573.62px;width:84px;height:23.6px;border:1.4px solid #1bb476;border-radius:12px"></div>
<div class="a" style="left:1755.7px;top:579.42px;font-size:10.3px;line-height:13px;color:#6b6f78;white-space:nowrap">SELECT</div>
<svg class="a" style="left:1801px;top:579.42px" width="11" height="12" viewBox="0 0 11 12" fill="none" stroke="#6b6f78" stroke-width="1.2"><path d="M5.5 1V10.8M1.5 7L5.5 11L9.5 7"/></svg>
<div class="a" style="left:231.3px;top:610.68px;width:14.5px;height:14px;border:1.2px solid #5d6374;border-radius:3px;background:#fff"></div>
<div class="a td" style="left:257.5px;width:30px;text-align:center;top:608.98px">5</div>
<div class="a td" style="left:295.3px;top:608.98px">13th Nov, 2025</div>
<div class="a td" style="left:401.3px;top:608.98px">Conditional</div>
<div class="a td" style="left:481.3px;top:608.98px">INV-25119</div>
<div class="a td" style="left:562.3px;top:608.98px">branch 4</div>
<div class="a td" style="left:630.3px;top:608.98px">Warehouse 4</div>
<div class="a td" style="left:721.3px;top:608.98px">customer 2</div>
<div class="a td" style="left:838.3px;top:608.98px">S M branch 4</div>
<div class="a td" style="left:974.3px;top:608.98px">1</div>
<div class="a td" style="left:1076.3px;top:608.98px">0</div>
<div class="a td" style="left:1158.3px;top:608.98px;padding-left:11.4px"><svg width="9" height="11" viewBox="0 0 9 11" style="position:absolute;left:0;top:1.5px" fill="none" stroke="#1a1a1a" stroke-width="1.05"><path d="M0.9 0.9 Q1.6 0.2 2.2 1.2 V8.2 Q2.2 10.3 4.4 10.3 Q6.9 10.3 6.9 8 Q6.9 5.9 4.6 6.4"/><path d="M0 4.3H8.8"/></svg>34,155.00</div>
<div class="a td" style="left:1256.3px;top:608.98px;padding-left:11.4px"><svg width="9" height="11" viewBox="0 0 9 11" style="position:absolute;left:0;top:1.5px" fill="none" stroke="#1a1a1a" stroke-width="1.05"><path d="M0.9 0.9 Q1.6 0.2 2.2 1.2 V8.2 Q2.2 10.3 4.4 10.3 Q6.9 10.3 6.9 8 Q6.9 5.9 4.6 6.4"/><path d="M0 4.3H8.8"/></svg>0.00</div>
<div class="a td" style="left:1341.3px;top:608.98px;padding-left:11.4px"><svg width="9" height="11" viewBox="0 0 9 11" style="position:absolute;left:0;top:1.5px" fill="none" stroke="#1a1a1a" stroke-width="1.05"><path d="M0.9 0.9 Q1.6 0.2 2.2 1.2 V8.2 Q2.2 10.3 4.4 10.3 Q6.9 10.3 6.9 8 Q6.9 5.9 4.6 6.4"/><path d="M0 4.3H8.8"/></svg>34,155.00</div>
<div class="a bd" style="left:1423px;top:607.48px;width:80px;background:#e8f8f0;color:#3cc58a">Approved</div>
<div class="a bd" style="left:1521px;top:607.48px;width:71px;background:#fff4e6;color:#f6a43a">Pending</div>
<div class="a bd" style="left:1629px;top:607.48px;width:47.7px;background:#feebed;color:#f0545f">Due</div>
<div class="a" style="left:1741px;top:606.18px;width:84px;height:23.6px;border:1.4px solid #1bb476;border-radius:12px"></div>
<div class="a" style="left:1755.7px;top:611.98px;font-size:10.3px;line-height:13px;color:#6b6f78;white-space:nowrap">SELECT</div>
<svg class="a" style="left:1801px;top:611.98px" width="11" height="12" viewBox="0 0 11 12" fill="none" stroke="#6b6f78" stroke-width="1.2"><path d="M5.5 1V10.8M1.5 7L5.5 11L9.5 7"/></svg>
<div class="a" style="left:231.3px;top:643.23px;width:14.5px;height:14px;border:1.2px solid #5d6374;border-radius:3px;background:#fff"></div>
<div class="a td" style="left:257.5px;width:30px;text-align:center;top:641.52px">6</div>
<div class="a td" style="left:295.3px;top:641.52px">24th Oct, 2025</div>
<div class="a td" style="left:401.3px;top:641.52px">Regular</div>
<div class="a td" style="left:481.3px;top:641.52px">INV-25108</div>
<div class="a td" style="left:562.3px;top:641.52px">branch 4</div>
<div class="a td" style="left:630.3px;top:641.52px">Warehouse 4</div>
<div class="a td" style="left:721.3px;top:641.52px">customer 2</div>
<div class="a td" style="left:838.3px;top:641.52px">S M branch 4</div>
<div class="a td" style="left:974.3px;top:641.52px">2</div>
<div class="a td" style="left:1076.3px;top:641.52px">1</div>
<div class="a td" style="left:1158.3px;top:641.52px;padding-left:11.4px"><svg width="9" height="11" viewBox="0 0 9 11" style="position:absolute;left:0;top:1.5px" fill="none" stroke="#1a1a1a" stroke-width="1.05"><path d="M0.9 0.9 Q1.6 0.2 2.2 1.2 V8.2 Q2.2 10.3 4.4 10.3 Q6.9 10.3 6.9 8 Q6.9 5.9 4.6 6.4"/><path d="M0 4.3H8.8"/></svg>28,773.00</div>
<div class="a td" style="left:1256.3px;top:641.52px;padding-left:11.4px"><svg width="9" height="11" viewBox="0 0 9 11" style="position:absolute;left:0;top:1.5px" fill="none" stroke="#1a1a1a" stroke-width="1.05"><path d="M0.9 0.9 Q1.6 0.2 2.2 1.2 V8.2 Q2.2 10.3 4.4 10.3 Q6.9 10.3 6.9 8 Q6.9 5.9 4.6 6.4"/><path d="M0 4.3H8.8"/></svg>28,773.00</div>
<div class="a td" style="left:1341.3px;top:641.52px;padding-left:11.4px"><svg width="9" height="11" viewBox="0 0 9 11" style="position:absolute;left:0;top:1.5px" fill="none" stroke="#1a1a1a" stroke-width="1.05"><path d="M0.9 0.9 Q1.6 0.2 2.2 1.2 V8.2 Q2.2 10.3 4.4 10.3 Q6.9 10.3 6.9 8 Q6.9 5.9 4.6 6.4"/><path d="M0 4.3H8.8"/></svg>0.00</div>
<div class="a bd" style="left:1423px;top:640.02px;width:80px;background:#e8f8f0;color:#3cc58a">Approved</div>
<div class="a bd" style="left:1521px;top:640.02px;width:78.6px;background:#e8f8f0;color:#3cc58a">Delivered</div>
<div class="a bd" style="left:1629px;top:640.02px;width:49.6px;background:#e8f8f0;color:#3cc58a">Paid</div>
<div class="a" style="left:1741px;top:638.73px;width:84px;height:23.6px;border:1.4px solid #1bb476;border-radius:12px"></div>
<div class="a" style="left:1755.7px;top:644.52px;font-size:10.3px;line-height:13px;color:#6b6f78;white-space:nowrap">SELECT</div>
<svg class="a" style="left:1801px;top:644.52px" width="11" height="12" viewBox="0 0 11 12" fill="none" stroke="#6b6f78" stroke-width="1.2"><path d="M5.5 1V10.8M1.5 7L5.5 11L9.5 7"/></svg>
<div class="a" style="left:231.3px;top:675.77px;width:14.5px;height:14px;border:1.2px solid #5d6374;border-radius:3px;background:#fff"></div>
<div class="a td" style="left:257.5px;width:30px;text-align:center;top:674.07px">7</div>
<div class="a td" style="left:295.3px;top:674.07px">24th Oct, 2025</div>
<div class="a td" style="left:401.3px;top:674.07px">Regular</div>
<div class="a td" style="left:481.3px;top:674.07px">INV-25107</div>
<div class="a td" style="left:562.3px;top:674.07px">branch 4</div>
<div class="a td" style="left:630.3px;top:674.07px">Warehouse 4</div>
<div class="a td" style="left:721.3px;top:674.07px">customer 3</div>
<div class="a td" style="left:838.3px;top:674.07px">SM 2 branch 4</div>
<div class="a td" style="left:974.3px;top:674.07px">1</div>
<div class="a td" style="left:1076.3px;top:674.07px">0</div>
<div class="a td" style="left:1158.3px;top:674.07px;padding-left:11.4px"><svg width="9" height="11" viewBox="0 0 9 11" style="position:absolute;left:0;top:1.5px" fill="none" stroke="#1a1a1a" stroke-width="1.05"><path d="M0.9 0.9 Q1.6 0.2 2.2 1.2 V8.2 Q2.2 10.3 4.4 10.3 Q6.9 10.3 6.9 8 Q6.9 5.9 4.6 6.4"/><path d="M0 4.3H8.8"/></svg>23.00</div>
<div class="a td" style="left:1256.3px;top:674.07px;padding-left:11.4px"><svg width="9" height="11" viewBox="0 0 9 11" style="position:absolute;left:0;top:1.5px" fill="none" stroke="#1a1a1a" stroke-width="1.05"><path d="M0.9 0.9 Q1.6 0.2 2.2 1.2 V8.2 Q2.2 10.3 4.4 10.3 Q6.9 10.3 6.9 8 Q6.9 5.9 4.6 6.4"/><path d="M0 4.3H8.8"/></svg>23.00</div>
<div class="a td" style="left:1341.3px;top:674.07px;padding-left:11.4px"><svg width="9" height="11" viewBox="0 0 9 11" style="position:absolute;left:0;top:1.5px" fill="none" stroke="#1a1a1a" stroke-width="1.05"><path d="M0.9 0.9 Q1.6 0.2 2.2 1.2 V8.2 Q2.2 10.3 4.4 10.3 Q6.9 10.3 6.9 8 Q6.9 5.9 4.6 6.4"/><path d="M0 4.3H8.8"/></svg>0.00</div>
<div class="a bd" style="left:1423px;top:672.57px;width:80px;background:#e8f8f0;color:#3cc58a">Approved</div>
<div class="a bd" style="left:1521px;top:672.57px;width:78.6px;background:#e8f8f0;color:#3cc58a">Delivered</div>
<div class="a bd" style="left:1629px;top:672.57px;width:49.6px;background:#e8f8f0;color:#3cc58a">Paid</div>
<div class="a" style="left:1741px;top:671.27px;width:84px;height:23.6px;border:1.4px solid #1bb476;border-radius:12px"></div>
<div class="a" style="left:1755.7px;top:677.07px;font-size:10.3px;line-height:13px;color:#6b6f78;white-space:nowrap">SELECT</div>
<svg class="a" style="left:1801px;top:677.07px" width="11" height="12" viewBox="0 0 11 12" fill="none" stroke="#6b6f78" stroke-width="1.2"><path d="M5.5 1V10.8M1.5 7L5.5 11L9.5 7"/></svg>
<div class="a" style="left:231.3px;top:708.32px;width:14.5px;height:14px;border:1.2px solid #5d6374;border-radius:3px;background:#fff"></div>
<div class="a td" style="left:257.5px;width:30px;text-align:center;top:706.62px">8</div>
<div class="a td" style="left:295.3px;top:706.62px">23rd Oct, 2025</div>
<div class="a td" style="left:401.3px;top:706.62px">Regular</div>
<div class="a td" style="left:481.3px;top:706.62px">INV-25106</div>
<div class="a td" style="left:562.3px;top:706.62px">branch 4</div>
<div class="a td" style="left:630.3px;top:706.62px">Warehouse 4</div>
<div class="a td" style="left:721.3px;top:706.62px">Walk In Customer</div>
<div class="a td" style="left:838.3px;top:706.62px">ABC Accounting firm</div>
<div class="a td" style="left:974.3px;top:706.62px">1</div>
<div class="a td" style="left:1076.3px;top:706.62px">0</div>
<div class="a td" style="left:1158.3px;top:706.62px;padding-left:11.4px"><svg width="9" height="11" viewBox="0 0 9 11" style="position:absolute;left:0;top:1.5px" fill="none" stroke="#1a1a1a" stroke-width="1.05"><path d="M0.9 0.9 Q1.6 0.2 2.2 1.2 V8.2 Q2.2 10.3 4.4 10.3 Q6.9 10.3 6.9 8 Q6.9 5.9 4.6 6.4"/><path d="M0 4.3H8.8"/></svg>23.00</div>
<div class="a td" style="left:1256.3px;top:706.62px;padding-left:11.4px"><svg width="9" height="11" viewBox="0 0 9 11" style="position:absolute;left:0;top:1.5px" fill="none" stroke="#1a1a1a" stroke-width="1.05"><path d="M0.9 0.9 Q1.6 0.2 2.2 1.2 V8.2 Q2.2 10.3 4.4 10.3 Q6.9 10.3 6.9 8 Q6.9 5.9 4.6 6.4"/><path d="M0 4.3H8.8"/></svg>23.00</div>
<div class="a td" style="left:1341.3px;top:706.62px;padding-left:11.4px"><svg width="9" height="11" viewBox="0 0 9 11" style="position:absolute;left:0;top:1.5px" fill="none" stroke="#1a1a1a" stroke-width="1.05"><path d="M0.9 0.9 Q1.6 0.2 2.2 1.2 V8.2 Q2.2 10.3 4.4 10.3 Q6.9 10.3 6.9 8 Q6.9 5.9 4.6 6.4"/><path d="M0 4.3H8.8"/></svg>0.00</div>
<div class="a bd" style="left:1423px;top:705.12px;width:80px;background:#e8f8f0;color:#3cc58a">Approved</div>
<div class="a bd" style="left:1521px;top:705.12px;width:78.6px;background:#e8f8f0;color:#3cc58a">Delivered</div>
<div class="a bd" style="left:1629px;top:705.12px;width:49.6px;background:#e8f8f0;color:#3cc58a">Paid</div>
<div class="a" style="left:1741px;top:703.82px;width:84px;height:23.6px;border:1.4px solid #1bb476;border-radius:12px"></div>
<div class="a" style="left:1755.7px;top:709.62px;font-size:10.3px;line-height:13px;color:#6b6f78;white-space:nowrap">SELECT</div>
<svg class="a" style="left:1801px;top:709.62px" width="11" height="12" viewBox="0 0 11 12" fill="none" stroke="#6b6f78" stroke-width="1.2"><path d="M5.5 1V10.8M1.5 7L5.5 11L9.5 7"/></svg>
<div class="a" style="left:231.3px;top:740.88px;width:14.5px;height:14px;border:1.2px solid #5d6374;border-radius:3px;background:#fff"></div>
<div class="a td" style="left:257.5px;width:30px;text-align:center;top:739.17px">9</div>
<div class="a td" style="left:295.3px;top:739.17px">22nd Oct, 2025</div>
<div class="a td" style="left:401.3px;top:739.17px">Regular</div>
<div class="a td" style="left:481.3px;top:739.17px">INV-25105</div>
<div class="a td" style="left:562.3px;top:739.17px">branch 4</div>
<div class="a td" style="left:630.3px;top:739.17px">Warehouse 4</div>
<div class="a td" style="left:721.3px;top:739.17px">customer 1</div>
<div class="a td" style="left:838.3px;top:739.17px">S M branch 4</div>
<div class="a td" style="left:974.3px;top:739.17px">5</div>
<div class="a td" style="left:1076.3px;top:739.17px">0</div>
<div class="a td" style="left:1158.3px;top:739.17px;padding-left:11.4px"><svg width="9" height="11" viewBox="0 0 9 11" style="position:absolute;left:0;top:1.5px" fill="none" stroke="#1a1a1a" stroke-width="1.05"><path d="M0.9 0.9 Q1.6 0.2 2.2 1.2 V8.2 Q2.2 10.3 4.4 10.3 Q6.9 10.3 6.9 8 Q6.9 5.9 4.6 6.4"/><path d="M0 4.3H8.8"/></svg>115.00</div>
<div class="a td" style="left:1256.3px;top:739.17px;padding-left:11.4px"><svg width="9" height="11" viewBox="0 0 9 11" style="position:absolute;left:0;top:1.5px" fill="none" stroke="#1a1a1a" stroke-width="1.05"><path d="M0.9 0.9 Q1.6 0.2 2.2 1.2 V8.2 Q2.2 10.3 4.4 10.3 Q6.9 10.3 6.9 8 Q6.9 5.9 4.6 6.4"/><path d="M0 4.3H8.8"/></svg>0.00</div>
<div class="a td" style="left:1341.3px;top:739.17px;padding-left:11.4px"><svg width="9" height="11" viewBox="0 0 9 11" style="position:absolute;left:0;top:1.5px" fill="none" stroke="#1a1a1a" stroke-width="1.05"><path d="M0.9 0.9 Q1.6 0.2 2.2 1.2 V8.2 Q2.2 10.3 4.4 10.3 Q6.9 10.3 6.9 8 Q6.9 5.9 4.6 6.4"/><path d="M0 4.3H8.8"/></svg>115.00</div>
<div class="a bd" style="left:1423px;top:737.67px;width:80px;background:#e8f8f0;color:#3cc58a">Approved</div>
<div class="a bd" style="left:1521px;top:737.67px;width:78.6px;background:#e8f8f0;color:#3cc58a">Delivered</div>
<div class="a bd" style="left:1629px;top:737.67px;width:47.7px;background:#feebed;color:#f0545f">Due</div>
<div class="a" style="left:1741px;top:736.38px;width:84px;height:23.6px;border:1.4px solid #1bb476;border-radius:12px"></div>
<div class="a" style="left:1755.7px;top:742.17px;font-size:10.3px;line-height:13px;color:#6b6f78;white-space:nowrap">SELECT</div>
<svg class="a" style="left:1801px;top:742.17px" width="11" height="12" viewBox="0 0 11 12" fill="none" stroke="#6b6f78" stroke-width="1.2"><path d="M5.5 1V10.8M1.5 7L5.5 11L9.5 7"/></svg>
<div class="a" style="left:216.2px;top:786.3px;font-size:13px;line-height:15px;color:#8a8c96;white-space:nowrap">Showing 1 to 9 out of 9 entries</div>
</body></html>
